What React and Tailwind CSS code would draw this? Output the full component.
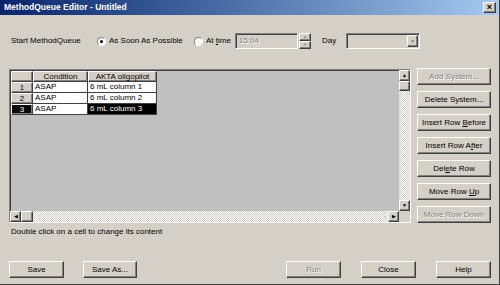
import React from "react";

const raised =
  "border border-t-white border-l-white border-r-[#404040] border-b-[#404040] shadow-[inset_-1px_-1px_0_#808080]";
const sunken =
  "border border-t-[#808080] border-l-[#808080] border-r-white border-b-white shadow-[inset_1px_1px_0_#404040]";
const dis = "text-[#808080] [text-shadow:1px_1px_0_#fff]";
const checker =
  "bg-[repeating-conic-gradient(#d4d0c8_0%_25%,#ffffff_0%_50%)] bg-[length:2px_2px]";

function Btn({ children, disabled, className = "" }) {
  return (
    <div
      className={`${raised} bg-[#d4d0c8] flex items-center justify-center h-[17px] ${
        disabled ? dis : "text-black"
      } ${className}`}
    >
      <span className="whitespace-pre">{children}</span>
    </div>
  );
}

function Radio({ checked }) {
  return (
    <div className="w-[9px] h-[9px] rounded-full border border-t-[#808080] border-l-[#808080] border-r-white border-b-white bg-white flex items-center justify-center">
      {checked && <div className="w-[3px] h-[3px] rounded-full bg-black" />}
    </div>
  );
}

function Arrow({ dir }) {
  const glyph = { up: "▲", down: "▼", left: "◀", right: "▶" }[dir];
  return (
    <div className={`${raised} bg-[#d4d0c8] w-[11px] h-[11px] flex items-center justify-center text-[5px] leading-none text-black`}>
      {glyph}
    </div>
  );
}

const rows = [
  { n: 1, c: "ASAP", a: "6 mL column 1" },
  { n: 2, c: "ASAP", a: "6 mL column 2" },
  { n: 3, c: "ASAP", a: "6 mL column 3", sel: true },
];

function Grid() {
  return (
    <div className={`${sunken} w-[402px] h-[154px] flex flex-col bg-[#c0c0c0]`}>
      <div className="flex flex-1 min-h-0">
        <div className="flex-1 pt-[1px] pl-[1px]">
          <div className="flex h-[11px]">
            <div className={`${raised} w-[22px] bg-[#d4d0c8]`} />
            <div className={`${raised} w-[55px] bg-[#d4d0c8] flex items-center justify-center leading-none`}>Condition</div>
            <div className={`${raised} w-[69px] bg-[#d4d0c8] flex items-center justify-center leading-none`}>AKTA oligopilot</div>
          </div>
          {rows.map((r) => (
            <div key={r.n} className="flex h-[11px]">
              <div
                className={`${raised} w-[22px] flex items-center justify-center leading-none ${
                  r.sel ? "bg-[#0a0a0a] text-white" : "bg-[#d4d0c8] text-black"
                }`}
              >
                {r.n}
              </div>
              <div className="w-[55px] bg-white text-black border-r border-b border-[#404040] flex items-center pl-[2px] leading-none">{r.c}</div>
              <div
                className={`w-[69px] border-r border-b border-[#404040] flex items-center pl-[2px] leading-none ${
                  r.sel ? "bg-black text-white" : "bg-white text-black"
                }`}
              >
                {r.a}
              </div>
            </div>
          ))}
        </div>
        <div className={`w-[11px] flex flex-col ${checker}`}>
          <Arrow dir="up" />
          <div className={`${raised} bg-[#d4d0c8] w-[11px] h-[10px]`} />
          <div className="flex-1" />
          <Arrow dir="down" />
        </div>
      </div>
      <div className="flex h-[11px]">
        <div className={`flex-1 flex ${checker}`}>
          <Arrow dir="left" />
          <div className={`${raised} bg-[#d4d0c8] w-[12px] h-[11px]`} />
          <div className="flex-1" />
          <Arrow dir="right" />
        </div>
        <div className="w-[11px] bg-[#d4d0c8]" />
      </div>
    </div>
  );
}

export default function App() {
  return (
    <div className="w-[500px] h-[285px] bg-[#d4d0c8] flex flex-col font-['Liberation_Sans',Arial,sans-serif] text-[8px] text-black border-r border-b border-[#404040] overflow-hidden">
      <div className="h-[15px] bg-gradient-to-r from-[#0a246a] to-[#a6caf0] flex items-center justify-between pl-[4px] pr-[3px]">
        <span className="text-white font-bold text-[8.5px] leading-none">MethodQueue Editor - Untitled</span>
        <div className={`${raised} bg-[#d4d0c8] w-[13px] h-[11px] flex items-center justify-center text-[9px] font-bold leading-none`}>
          ×
        </div>
      </div>

      <div className="flex items-center mt-[18px] h-[16px] pl-[11px]">
        <span className="w-[86px]">Start MethodQueue</span>
        <Radio checked />
        <span className="ml-[3px] w-[85px]">As Soon As Possible</span>
        <Radio />
        <span className="ml-[3px] w-[29px]">
          At <span className="underline">t</span>ime
        </span>
        <div className={`${sunken} bg-[#d4d0c8] w-[63px] h-[16px] flex items-center pl-[3px] ${dis}`}>15:04</div>
        <div className="flex flex-col ml-[1px] w-[12px] h-[16px]">
          <div className={`${raised} bg-[#d4d0c8] flex-1 flex items-center justify-center text-[4px] leading-none text-[#808080]`}>▲</div>
          <div className={`${raised} bg-[#d4d0c8] flex-1 flex items-center justify-center text-[4px] leading-none text-[#808080]`}>▼</div>
        </div>
        <span className="ml-[11px] w-[24px]">Day</span>
        <div className={`${sunken} bg-[#d4d0c8] w-[74px] h-[16px] flex justify-end items-stretch p-[1px]`}>
          <div className={`${raised} bg-[#d4d0c8] w-[11px] flex items-center justify-center text-[5px] leading-none text-[#808080]`}>▼</div>
        </div>
      </div>

      <div className="flex mt-[20px] pl-[9px]">
        <Grid />
        <div className="ml-[6px] w-[74px] flex flex-col gap-[6px] -mt-[1px]">
          <Btn disabled>Add System...</Btn>
          <Btn>Delete System...</Btn>
          <Btn>
            Insert Row <span className="underline">B</span>efore
          </Btn>
          <Btn>
            Insert Row A<span className="underline">f</span>ter
          </Btn>
          <Btn>
            Del<span className="underline">e</span>te Row
          </Btn>
          <Btn>
            Move Row <span className="underline">U</span>p
          </Btn>
          <Btn disabled>Move Row Down</Btn>
        </div>
      </div>

      <div className="pl-[11px] mt-[3px] h-[12px] flex items-center">Double click on a cell to change its content</div>

      <div className="flex mt-[23px] pl-[9px]">
        <Btn className="w-[55px]">Save</Btn>
        <Btn className="w-[54px] ml-[19px]">Save As...</Btn>
        <Btn disabled className="w-[55px] ml-[149px]">Run</Btn>
        <Btn className="w-[55px] ml-[20px]">Close</Btn>
        <Btn className="w-[55px] ml-[20px]">Help</Btn>
      </div>
    </div>
  );
}
